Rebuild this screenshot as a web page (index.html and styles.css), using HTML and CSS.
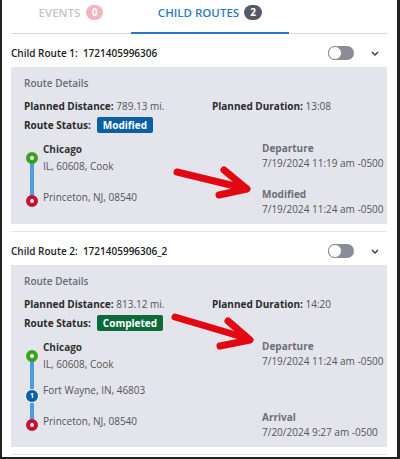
FILE: index.html
```html
<!DOCTYPE html>
<html lang="en">

<head>
    <meta charset="UTF-8">
    <meta name="viewport" content="width=device-width, initial-scale=1.0">
    <title>Child Routes</title>
    <link rel="stylesheet" href="styles.css">
</head>

<body>

    <div class="page">
        <div class="frame">
            <div class="tabs">
                <div class="tab">Events <span class="badge badge-events">0</span></div>
                <div class="tab tab-active">Child Routes <span class="badge badge-routes">2</span></div>
            </div>

            <div class="route-card">
                <div class="route-header">
                    <span class="route-title">Child Route 1:&nbsp; 1721405996306</span>
                    <span class="toggle"></span>
                    <svg class="chevron" viewBox="0 0 8 5"><polyline points="1,1 4,4 7,1" /></svg>
                </div>
                <div class="route-panel">
                    <div class="panel-heading">Route Details</div>
                    <div class="details">
                        <div><b>Planned Distance:</b> 789.13 mi.</div>
                        <div><b>Planned Duration:</b> 13:08</div>
                        <div class="status"><b>Route Status:</b> <span class="status-badge status-modified">Modified</span></div>
                    </div>
                    <div class="route-body">
                        <div class="stops">
                            <div class="stop stop-origin">
                                <span class="marker marker-start"></span>
                                <div>
                                    <div class="stop-name">Chicago</div>
                                    <div class="stop-address">IL, 60608, Cook</div>
                                </div>
                            </div>
                            <div class="stop">
                                <span class="marker marker-end"></span>
                                <div>Princeton, NJ, 08540</div>
                            </div>
                        </div>
                        <div class="times">
                            <div class="time">
                                <div class="time-label">Departure</div>
                                <div>7/19/2024 11:19 am -0500</div>
                            </div>
                            <div class="time">
                                <div class="time-label">Modified</div>
                                <div>7/19/2024 11:24 am -0500</div>
                            </div>
                        </div>
                    </div>
                </div>
            </div>

            <div class="route-card">
                <div class="route-header">
                    <span class="route-title">Child Route 2:&nbsp; 1721405996306_2</span>
                    <span class="toggle"></span>
                    <svg class="chevron" viewBox="0 0 8 5"><polyline points="1,1 4,4 7,1" /></svg>
                </div>
                <div class="route-panel">
                    <div class="panel-heading">Route Details</div>
                    <div class="details">
                        <div><b>Planned Distance:</b> 813.12 mi.</div>
                        <div><b>Planned Duration:</b> 14:20</div>
                        <div class="status"><b>Route Status:</b> <span class="status-badge status-completed">Completed</span></div>
                    </div>
                    <div class="route-body">
                        <div class="stops stops-via">
                            <div class="stop stop-origin">
                                <span class="marker marker-start"></span>
                                <div>
                                    <div class="stop-name">Chicago</div>
                                    <div class="stop-address">IL, 60608, Cook</div>
                                </div>
                            </div>
                            <div class="stop">
                                <span class="marker marker-via">1</span>
                                <div>Fort Wayne, IN, 46803</div>
                            </div>
                            <div class="stop">
                                <span class="marker marker-end"></span>
                                <div>Princeton, NJ, 08540</div>
                            </div>
                        </div>
                        <div class="times times-via">
                            <div class="time">
                                <div class="time-label">Departure</div>
                                <div>7/19/2024 11:24 am -0500</div>
                            </div>
                            <div class="time">
                                <div class="time-label">Arrival</div>
                                <div>7/20/2024 9:27 am -0500</div>
                            </div>
                        </div>
                    </div>
                </div>
            </div>
        </div>

        <svg class="arrows" viewBox="0 0 400 459">
            <line x1="177" y1="172" x2="243" y2="188" />
            <polyline points="224,170 247,189 219,195" />
            <line x1="175" y1="317" x2="246" y2="338" />
            <polyline points="228,321 250,340 220,346" />
        </svg>
    </div>

</body>

</html>
```

FILE: styles.css
```css
body {
    margin: 0;
    font-family: "Open Sans", "Noto Sans", sans-serif;
    font-size: 10px;
    color: #333;
    background-color: #fff;
}

.page {
    position: relative;
    width: 400px;
    height: 459px;
}

.frame {
    width: 400px;
    height: 459px;
    box-sizing: border-box;
    border-left: 2px solid #222;
    border-right: 3px solid #222;
    border-bottom: 2px solid #222;
    padding: 0 10px 0 9px;
    overflow: hidden;
}

/* tabs */
.tabs {
    display: flex;
    height: 33px;
    border-bottom: 1px solid #d9dae0;
}

.tab {
    width: 120px;
    height: 34px;
    box-sizing: border-box;
    display: flex;
    justify-content: center;
    align-items: flex-start;
    gap: 6px;
    padding-top: 4px;
    line-height: 17px;
    font-size: 11.5px;
    font-weight: 600;
    text-transform: uppercase;
    color: #c3c4cc;
}

.tab-active {
    width: 158px;
    gap: 5px;
    color: #2b7bc4;
    border-bottom: 2px solid #2b7bc4;
}

.badge {
    min-width: 17px;
    height: 15px;
    margin-top: 1px;
    border-radius: 8px;
    display: inline-flex;
    justify-content: center;
    align-items: center;
    font-size: 10px;
    font-weight: 700;
    color: #fff;
}

.badge-events {
    background-color: #f3b5bb;
}

.badge-routes {
    min-width: 18px;
    background-color: #555a66;
}

/* route cards */
.route-card {
    padding: 5px 0 7px;
    border-bottom: 1px solid #e3e3e8;
}

.route-header {
    display: flex;
    align-items: center;
    height: 28px;
}

.route-title {
    flex: 1;
    font-weight: 600;
    color: #222;
}

.toggle {
    position: relative;
    width: 26px;
    height: 14px;
    border-radius: 7px;
    background-color: #8b8c98;
}

.toggle::after {
    content: '';
    position: absolute;
    left: 0;
    top: 0;
    width: 14px;
    height: 14px;
    box-sizing: border-box;
    border-radius: 50%;
    border: 1.5px solid #8b8c98;
    background-color: #fff;
}

.chevron {
    width: 8px;
    height: 5px;
    margin: 0 8px 0 17px;
    fill: none;
    stroke: #444;
    stroke-width: 1.5;
}

.route-panel {
    background-color: #e3e4ec;
    padding: 8px 13px 7px;
}

.panel-heading {
    line-height: 16px;
    font-weight: 600;
    color: #6a6b75;
}

.details {
    display: grid;
    grid-template-columns: 188px 1fr;
    row-gap: 2px;
    margin-top: 7px;
    line-height: 16px;
    color: #555;
}

.details b {
    font-weight: 700;
    color: #2b2b2b;
}

.status {
    grid-column: 1 / -1;
    display: flex;
    align-items: center;
    gap: 6px;
    height: 17px;
}

.status-badge {
    height: 16px;
    line-height: 16px;
    padding: 0 6px;
    border-radius: 2px;
    font-weight: 700;
    color: #fff;
}

.status-modified {
    background-color: #0b5fa5;
}

.status-completed {
    background-color: #0c6b3c;
}

/* stops timeline */
.route-body {
    display: flex;
    align-items: flex-start;
    margin-top: 8px;
    line-height: 16px;
    color: #555;
}

.stops {
    position: relative;
    flex: none;
    width: 238px;
    display: flex;
    flex-direction: column;
    gap: 15px;
}

.stops::before {
    content: '';
    position: absolute;
    left: 6px;
    width: 4px;
    top: 16px;
    bottom: 6px;
    background-color: #4d9be0;
}

.stops-via {
    gap: 10px;
}

.stop {
    display: flex;
    align-items: flex-start;
}

.stop-origin {
    align-items: center;
}

.marker {
    position: relative;
    flex: none;
    width: 12px;
    height: 12px;
    margin: 6px 5px 0 2px;
    box-sizing: border-box;
    border-radius: 50%;
    border: 4px solid;
    background-color: #fff;
}

.stop-origin .marker {
    margin-top: 0;
}

.marker-start {
    border-color: #3aa01d;
}

.marker-end {
    border-color: #c8102e;
}

.marker-via {
    width: 14px;
    height: 14px;
    margin: 7px 4px 0 1px;
    border: 1.5px solid #fff;
    background-color: #0b5fa5;
    color: #fff;
    font-size: 7px;
    font-weight: 700;
    line-height: 11px;
    text-align: center;
}

.stop-name {
    font-weight: 700;
    color: #333;
}

.stop-address {
    margin-top: 1px;
}

.times {
    line-height: 15px;
    white-space: nowrap;
}

.time-label {
    font-weight: 700;
    color: #6d6e78;
}

.time + .time {
    margin-top: 16px;
}

.times-via .time + .time {
    margin-top: 41px;
}

/* annotation arrows */
.arrows {
    position: absolute;
    left: 0;
    top: 0;
    width: 400px;
    height: 459px;
    pointer-events: none;
    fill: none;
    stroke: #e30613;
    stroke-width: 7;
    stroke-linecap: round;
    stroke-linejoin: round;
}
```
